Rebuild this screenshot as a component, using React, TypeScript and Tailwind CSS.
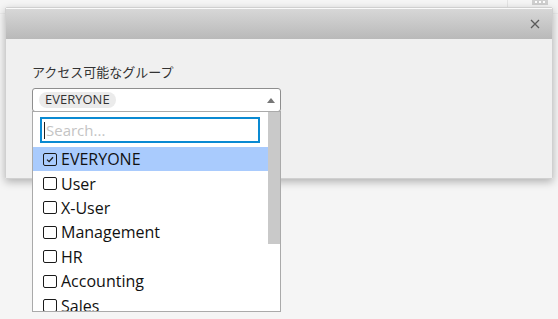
import React from 'react'

const groups = ['EVERYONE', 'User', 'X-User', 'Management', 'HR', 'Accounting', 'Sales']

function Checkbox({ checked }: { checked: boolean }) {
  return (
    <span className="flex h-[13px] w-[14px] shrink-0 items-center justify-center rounded-[2px] border-[1.5px] border-[#1a1a1a]">
      {checked && (
        <svg width="8" height="7" viewBox="0 0 8 7" fill="none">
          <path d="M1 3.6 L3.1 5.6 L7 1.2" stroke="#1a1a1a" strokeWidth="1.3" />
        </svg>
      )}
    </span>
  )
}

export default function App() {
  return (
    <div className="relative h-[319px] w-[558px] overflow-hidden bg-[#f5f5f5] font-['Open_Sans',sans-serif]">
      {/* page behind the dialog */}
      <div className="flex h-[14px] justify-end border-b border-[#ececec] pr-[10px]">
        <div className="h-[14px] w-px bg-[#e4e4e4]" />
        <div className="ml-[24px] flex h-[5px] w-[16px] items-start justify-center gap-[2px] bg-[#cfcfcf] pt-[1px]">
          <span className="h-[2px] w-[2px] bg-white" />
          <span className="h-[2px] w-[2px] bg-white" />
          <span className="h-[2px] w-[2px] bg-white" />
        </div>
      </div>

      {/* dialog */}
      <div className="absolute left-[5px] top-[7px] w-[548px] rounded-[2px] border border-[#d0d0d0] shadow-[0_3px_8px_rgba(0,0,0,0.28)]">
        <div className="flex h-[31px] items-center justify-end border-t border-[#fafafa] bg-gradient-to-b from-[#d7d7d7] to-[#b9b9b9] pr-[12px]">
          <svg width="10" height="10" viewBox="0 0 10 10">
            <path d="M1 1 L9 9 M9 1 L1 9" stroke="#5a5a5a" strokeWidth="1.3" />
          </svg>
        </div>
        <div className="h-[139px] bg-[#f0f0f0] pl-[26px] pt-[24px]">
          <div className="font-['Noto_Sans_CJK_JP',sans-serif] text-[13px] leading-[18px] text-[#333]">
            アクセス可能なグループ
          </div>
          <div className="relative mt-[7px] w-[249px]">
            <div className="flex h-[24px] items-center justify-between rounded-[3px] border border-[#8e8e8e] bg-white pl-[6px] pr-[5px]">
              <span className="flex h-[16px] items-center rounded-full bg-[#ebebeb] px-[6px] text-[13px] text-[#333]">
                EVERYONE
              </span>
              <svg width="8" height="5" viewBox="0 0 8 5">
                <path d="M0 5 L4 0 L8 5 Z" fill="#777" />
              </svg>
            </div>

            {/* open dropdown */}
            <div className="absolute left-0 top-[23px] z-10 flex h-[201px] w-[249px] border border-[#aaa] bg-white">
              <div className="flex-1 overflow-hidden">
                <div className="px-[7px] pt-[5px]">
                  <div className="flex h-[26px] w-[220px] items-center border-2 border-[#0a8ad2] pl-[2px] text-[15px] text-[#c4c4c4]">
                    <span className="mr-px h-[17px] w-px bg-[#222]" />
                    Search...
                  </div>
                </div>
                <div className="mt-[4px]">
                  {groups.map((g, i) => (
                    <div
                      key={g}
                      className={`flex h-[24.4px] items-center gap-[4px] pl-[10px] text-[16px] text-[#111] ${
                        i === 0 ? 'bg-[#a9cbfd]' : ''
                      }`}
                    >
                      <Checkbox checked={i === 0} />
                      {g}
                    </div>
                  ))}
                </div>
              </div>
              <div className="w-[12px] shrink-0 bg-white">
                <div className="h-[132px] bg-[#c9c9c9]" />
              </div>
            </div>
          </div>
        </div>
      </div>
    </div>
  )
}
